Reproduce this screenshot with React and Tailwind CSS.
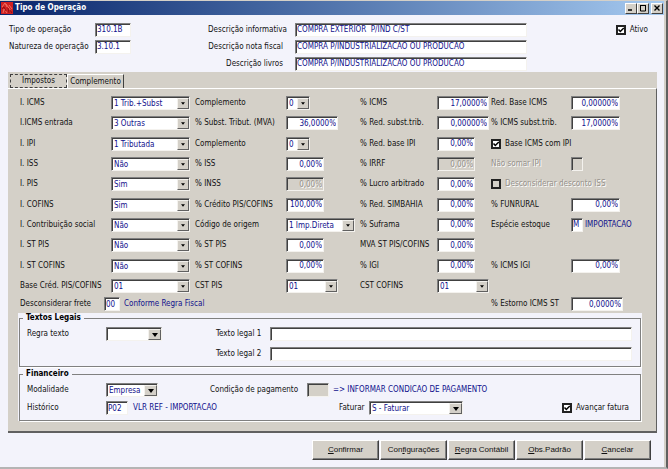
import React, { useId } from "react";

const edge =
  "border border-t-[#808080] border-l-[#808080] border-r-[#f4f2ee] border-b-[#f4f2ee] shadow-[inset_1px_1px_0_#404040]";

function Field({ id, value, w = "w-[38px]", align = "text-left pl-[1px]", disabled = false, label }) {
  return (
    <input
      id={id}
      type="text"
      aria-label={label}
      defaultValue={value}
      disabled={disabled}
      className={`h-[14px] shrink-0 rounded-none leading-[10px] outline-none ${edge} ${w} ${align} ${
        disabled ? "bg-[#d4d0c8] text-[#96928c] [text-shadow:1px_1px_0_#fff]" : "bg-white text-[#10108c]"
      }`}
    />
  );
}

function Picker({ id, value, w = "w-[79px]", label, wide = false }) {
  return (
    <span className={`relative block h-[14px] shrink-0 bg-white ${edge} ${w}`}>
      <select
        id={id}
        aria-label={label}
        defaultValue={value}
        className="block h-full w-full appearance-none bg-transparent pt-[1px] pl-[2px] leading-[11px] text-[#10108c] outline-none"
      >
        <option value={value}>{value}</option>
      </select>
      <span
        className={`pointer-events-none absolute top-[1px] right-0 bottom-0 flex items-center justify-center border border-t-[#f4f2ee] border-l-[#f4f2ee] border-r-[#606060] border-b-[#606060] bg-[#d4d0c8] ${
          wide ? "w-[13px]" : "w-[12px]"
        }`}
      >
        <svg
          viewBox="0 0 6 4"
          className={wide ? "h-[4px] w-[6px]" : "h-[3px] w-[4px]"}
          fill="#000"
          aria-hidden="true"
        >
          <path d="M0 0h6L3 4z" />
        </svg>
      </span>
    </span>
  );
}

function Check({ text, checked = false, disabled = false }) {
  const id = useId();
  return (
    <span className="flex items-center gap-1 whitespace-nowrap">
      <span className="relative block size-[10px] shrink-0">
        <input
          id={id}
          type="checkbox"
          defaultChecked={checked}
          disabled={disabled}
          className={`peer block size-[10px] appearance-none border-2 border-[#222] ${
            disabled ? "bg-[#d4d0c8]" : "bg-white"
          }`}
        />
        <svg
          viewBox="0 0 10 10"
          className="pointer-events-none absolute inset-0 hidden size-[10px] peer-checked:block"
          fill="none"
          stroke="#000"
          strokeWidth="1.5"
          aria-hidden="true"
        >
          <path d="M2.5 4.5 4.3 6.5 7.8 3" />
        </svg>
      </span>
      <label htmlFor={id} className={disabled ? "text-[#96928c] [text-shadow:1px_1px_0_#fff]" : ""}>
        {text}
      </label>
    </span>
  );
}

const num = "text-right pr-[1px]";
const W51 = "w-[52px]";
const W49 = "w-[49px]";

/* Each row holds four label/control pairs; null leaves the pair empty. */
const rows = [
  [
    ["I. ICMS", "sel", "1 Trib.+Subst"],
    ["Complemento", "sel", "0", "w-[24px]"],
    ["% ICMS", "num", "17,0000%", W51],
    ["Red. Base ICMS", "num", "0,00000%", W49],
  ],
  [
    ["I.ICMS entrada", "sel", "3 Outras"],
    ["% Subst. Tribut. (MVA)", "num", "36,0000%", W51],
    ["% Red. subst.trib.", "num", "0,00000%", W51],
    ["% ICMS subst.trib.", "num", "17,0000%", W49],
  ],
  [
    ["I. IPI", "sel", "1 Tributada"],
    ["Complemento", "sel", "0", "w-[24px]"],
    ["% Red. base IPI", "num", "0,00%"],
    ["Base ICMS com IPI", "check", true],
  ],
  [
    ["I. ISS", "sel", "Não"],
    ["% ISS", "num", "0,00%"],
    ["% IRRF", "off", "0,00%"],
    ["Não somar IPI", "off", "", "w-[12px]"],
  ],
  [
    ["I. PIS", "sel", "Sim"],
    ["% INSS", "off", "0,00%"],
    ["% Lucro arbitrado", "num", "0,00%"],
    ["Desconsiderar desconto ISS", "check", false],
  ],
  [
    ["I. COFINS", "sel", "Sim"],
    ["% Crédito PIS/COFINS", "num", "100,00%"],
    ["% Red. SIMBAHIA", "num", "0,00%"],
    ["% FUNRURAL", "num", "0,00%", W49],
  ],
  [
    ["I. Contribuição social", "sel", "Não"],
    ["Código de origem", "sel", "1 Imp.Direta", "w-[69px]"],
    ["% Suframa", "num", "0,00%"],
    ["Espécie estoque", "code", "M", "w-[12px]", "IMPORTACAO"],
  ],
  [
    ["I. ST PIS", "sel", "Não"],
    ["% ST PIS", "num", "0,00%"],
    ["MVA ST PIS/COFINS", "num", "0,00%"],
    null,
  ],
  [
    ["I. ST COFINS", "sel", "Não"],
    ["% ST COFINS", "num", "0,00%"],
    ["% IGI", "num", "0,00%"],
    ["% ICMS IGI", "num", "0,00%", W49],
  ],
  [
    ["Base Créd. PIS/COFINS", "sel", "01"],
    ["CST PIS", "sel", "01", W51],
    ["CST COFINS", "sel", "01", W51],
    null,
  ],
];

function Pair({ cell }) {
  const id = useId();
  if (!cell) return <span className="col-span-2" />;
  const [label, kind, value, w, note] = cell;
  if (kind === "check") {
    return (
      <div className="col-span-2">
        <Check text={label} checked={value} disabled={!value} />
      </div>
    );
  }
  const grey = label === "Não somar IPI";
  return (
    <>
      <label htmlFor={id} className={grey ? "text-[#96928c] [text-shadow:1px_1px_0_#fff]" : ""}>
        {label}
      </label>
      <span className="flex items-center gap-[2px]">
        {kind === "sel" && <Picker id={id} value={value} w={w} />}
        {kind === "num" && <Field id={id} value={value} w={w} align={num} />}
        {kind === "off" && <Field id={id} value={value} w={w} align={num} disabled />}
        {kind === "code" && <Field id={id} value={value} w={w} />}
        {note && <span className="text-[#10108c]">{note}</span>}
      </span>
    </>
  );
}

const columns =
  "grid grid-cols-[91px_84px_91px_74px_77px_54px_80px_1fr] items-center whitespace-nowrap";

function TitleButton({ label, children }) {
  return (
    <button
      type="button"
      aria-label={label}
      className="flex h-[11px] w-[12px] items-center justify-center border border-t-white border-l-white border-r-[#404040] border-b-[#404040] bg-[#d4d0c8]"
    >
      <svg viewBox="0 0 8 8" className="size-[8px]" fill="none" stroke="#000" aria-hidden="true">
        {children}
      </svg>
    </button>
  );
}

function Group({ title, children }) {
  return (
    <fieldset className="min-w-0 border border-[#808080] px-[7px] pt-[2px] pb-[3px] shadow-[1px_1px_0_#fff]">
      <legend className="-ml-1 px-[3px] leading-[10px] font-bold text-black">{title}</legend>
      {children}
    </fieldset>
  );
}

function Action({ pre = "", hot, post }) {
  return (
    <button
      type="button"
      className="h-[20px] w-[67px] border border-t-white border-l-white border-r-[#404040] border-b-[#404040] bg-[#d4d0c8] text-center [font-family:'Liberation_Sans',Arial,sans-serif] text-[8px] leading-[10px] shadow-[inset_-1px_-1px_0_#808080]"
    >
      {pre}
      <u>{hot}</u>
      {post}
    </button>
  );
}

export default function App() {
  return (
    <div className="flex min-h-screen flex-col border-t border-r-2 border-b-2 border-t-[#d4d0c8] border-r-[#606060] border-b-[#b4b4b4] bg-[#f3f3fb] text-[8px] leading-[10px] text-[#111] [font-family:'DejaVu_Sans_Condensed','DejaVu_Sans',sans-serif]">
      <div className="flex grow flex-col border-r-2 border-[#d4d0c8]">
        <header className="flex h-[14px] items-center bg-linear-to-r from-[#0a246a] to-[#a6caf0] pr-[1px] pl-[1px]">
          <svg viewBox="0 0 12 12" className="size-[12px]" aria-hidden="true">
            <rect width="12" height="12" fill="#d02020" />
            <path d="M1 5 4 1l2 4M5 2l5 7M2 11l1-4 3 4M8 3l3 4" stroke="#f07868" strokeWidth="0.9" fill="none" />
            <path d="M1 7l2-2 2 4M7 6l1 5M9 8l2 3" stroke="#8c0c10" strokeWidth="0.9" fill="none" />
          </svg>
          <h1 className="ml-[2px] grow font-bold text-white">Tipo de Operação</h1>
          <TitleButton label="Minimizar">
            <path d="M1 6h4" strokeWidth="1.5" />
          </TitleButton>
          <TitleButton label="Maximizar">
            <path d="M1 1.5h6M1.5 1v6h5V1" />
          </TitleButton>
          <span className="w-[2px]" />
          <TitleButton label="Fechar">
            <path d="M1.5 1.5l5 5M6.5 1.5l-5 5" strokeWidth="1.4" />
          </TitleButton>
        </header>

        <div className="flex pt-[6px] pl-[9px] whitespace-nowrap">
          <div className="grid w-[199px] grid-cols-[86px_1fr] content-start items-center">
            <label htmlFor="tipo" className="leading-[17px]">Tipo de operação</label>
            <Field id="tipo" value="310.1B" w="w-[36px]" />
            <label htmlFor="nat" className="leading-[17px]">Natureza de operação</label>
            <Field id="nat" value="3.10.1" w="w-[36px]" />
          </div>
          <div className="grid grow grid-cols-[79px_auto_1fr] content-start items-center gap-x-2 leading-[17px]">
            <label htmlFor="d1" className="text-right">Descrição informativa</label>
            <Field id="d1" value="COMPRA EXTERIOR  P/IND C/ST" w="w-[232px]" />
            <span className="flex justify-end pr-[16px]">
              <Check text="Ativo" checked />
            </span>
            <label htmlFor="d2" className="pr-1 text-right">Descrição nota fiscal</label>
            <Field id="d2" value="COMPRA P/INDUSTRIALIZACAO OU PRODUCAO" w="w-[232px]" />
            <span />
            <label htmlFor="d3" className="pr-1 text-right">Descrição livros</label>
            <Field id="d3" value="COMPRA P/INDUSTRIALIZACAO OU PRODUCAO" w="w-[232px]" />
            <span />
          </div>
        </div>

        <main className="mr-[7px] ml-[8px] bg-[#d4d0c8]">
          <div role="tablist" className="flex h-[16px] items-end">
            <button
              type="button"
              role="tab"
              aria-selected="true"
              className="ml-[2px] h-[14px] w-[57px] border border-dashed border-[#404040] leading-[10px]"
            >
              Impostos
            </button>
            <button
              type="button"
              role="tab"
              aria-selected="false"
              className="h-[14px] w-[57px] border-t border-r border-l border-t-white border-r-[#404040] border-l-white text-center leading-[12px]"
            >
              Complemento
            </button>
          </div>
          <div className="border-t border-r border-b-2 border-t-white border-r-[#606060] border-b-[#606060] pt-[4px] pr-[14px] pb-[10px] pl-[10px]">
            <div className="ml-[2px] grid h-[220px] grid-rows-[repeat(10,1fr)_17px]">
              {rows.map((cells, i) => (
                <div key={i} className={columns}>
                  {cells.map((cell, j) => (
                    <Pair key={j} cell={cell} />
                  ))}
                </div>
              ))}
              <div className="grid grid-cols-[84px_387px_80px_1fr] items-center whitespace-nowrap">
                <label htmlFor="frete">Desconsiderar frete</label>
                <span className="flex items-center gap-1 text-[#10108c]">
                  <Field id="frete" value="00" w="w-[16px]" />
                  Conforme Regra Fiscal
                </span>
                <label htmlFor="estorno">% Estorno ICMS ST</label>
                <Field id="estorno" value="0,0000%" w={W51} align={num} />
              </div>
            </div>

            <div className="flex flex-col gap-[2px] bg-[#f3f3fb] px-[1px] whitespace-nowrap">
              <Group title="Textos Legais">
                <div className="grid grid-cols-[79px_110px_54px_1fr] items-center gap-y-[2px] pr-[1px]">
                  <label htmlFor="regra">Regra texto</label>
                  <Picker id="regra" value="" w="w-[56px]" wide />
                  <label htmlFor="t1" className="leading-[18px]">Texto legal 1</label>
                  <Field id="t1" value="" w="w-full" />
                  <label htmlFor="t2" className="col-start-3 leading-[18px]">Texto legal 2</label>
                  <Field id="t2" value="" w="w-full" />
                </div>
              </Group>
              <Group title="Financeiro">
                <div className="flex h-[18px] items-center">
                  <label htmlFor="mod" className="w-[79px]">Modalidade</label>
                  <Picker id="mod" value="Empresa" w="w-[52px]" wide />
                  <label htmlFor="cond" className="ml-[52px] w-[97px]">Condição de pagamento</label>
                  <Field id="cond" value="" w="w-[22px]" disabled />
                  <span className="ml-1 text-[#10108c]">=&gt; INFORMAR CONDICAO DE PAGAMENTO</span>
                </div>
                <div className="flex h-[18px] items-center">
                  <label htmlFor="hist" className="w-[79px]">Histórico</label>
                  <Field id="hist" value="P02" w="w-[22px]" />
                  <span className="ml-[5px] w-[206px] text-[#10108c]">VLR REF - IMPORTACAO</span>
                  <label htmlFor="fat" className="w-[30px]">Faturar</label>
                  <Picker id="fat" value="S - Faturar" w="w-[94px]" wide />
                  <span className="ml-auto pr-1">
                    <Check text="Avançar fatura" checked />
                  </span>
                </div>
              </Group>
            </div>
          </div>
        </main>

        <footer className="flex justify-end gap-[1px] pt-[7px] pr-[13px] pb-[6px]">
          <Action hot="C" post="onfirmar" />
          <Action pre="Con" hot="f" post="igurações" />
          <Action hot="R" post="egra Contábil" />
          <Action hot="O" post="bs.Padrão" />
          <Action hot="C" post="ancelar" />
        </footer>
      </div>
    </div>
  );
}
